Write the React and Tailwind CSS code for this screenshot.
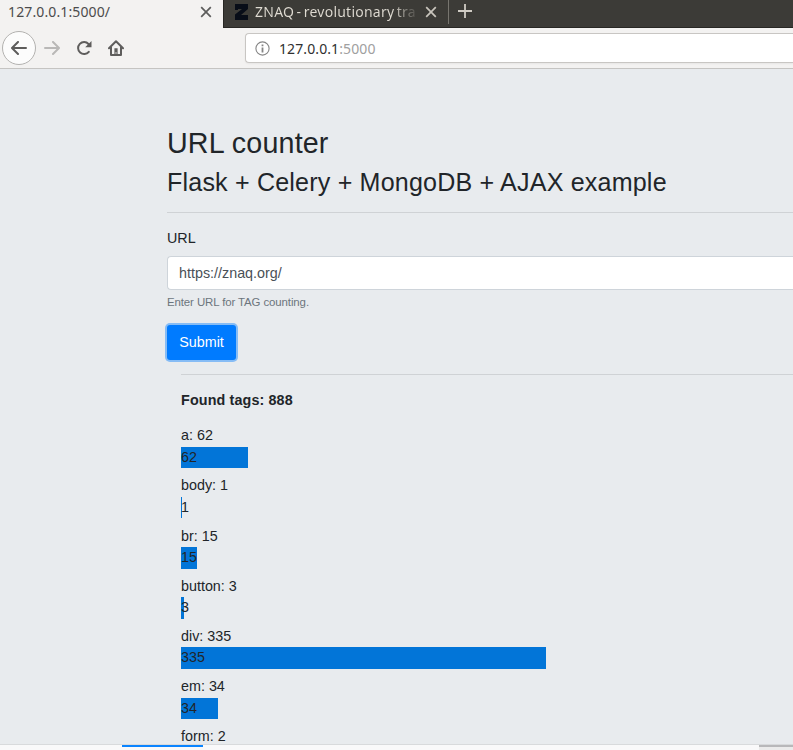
const tags = [
  ['a', 62, 67], ['body', 1, 1], ['br', 15, 16], ['button', 3, 3],
  ['div', 335, 365], ['em', 34, 37], ['form', 2, 0],
];

function Close({ color }) {
  return (
    <svg width="12" height="12" viewBox="0 0 12 12" className="shrink-0" fill="none" stroke={color} strokeWidth="1.7">
      <path d="M1.2 1.2 10.8 10.8M10.8 1.2 1.2 10.8" />
    </svg>
  );
}

function Tabs() {
  return (
    <div className="flex h-7 shrink-0 text-[14px] leading-6 whitespace-nowrap">
      <div className="flex w-[223px] shrink-0 items-start pl-2 text-[#4c4c4c]">
        <span className="w-[192px] tracking-[0.12px]">127.0.0.1:5000/</span>
        <div className="pt-[6px]"><Close color="#5c5c5b" /></div>
      </div>
      <div className="flex flex-1 items-start border-b border-l border-[#282724] bg-[#3c3b37] pl-[11px] text-[#dfdbd2]">
        <svg width="13" height="16" viewBox="0 0 13 16" className="mt-1 shrink-0">
          <path d="M0 0H13V5L6 11H13V16H0V10.5L7 5H3V6H0Z" fill="#080d18" />
        </svg>
        <div className="ml-[7px] w-[165px] bg-linear-to-r from-[#dfdbd2] from-83% to-[#3c3b37] bg-clip-text tracking-[0.24px] [word-spacing:-1.5px] text-transparent">ZNAQ - revolutionary tra</div>
        <div className="ml-[5px] pt-[6px]"><Close color="#c9c5bd" /></div>
        <div className="ml-[11px] h-6 w-px shrink-0 bg-[#77756f]" />
        <svg width="14" height="14" viewBox="0 0 14 14" className="mt-1 ml-[9px] shrink-0" stroke="#d0ccc4" strokeWidth="1.8">
          <path d="M7 0V14M0 7H14" />
        </svg>
      </div>
    </div>
  );
}

function Toolbar() {
  return (
    <div className="flex h-[41px] shrink-0 items-center border-b border-[#c5c4c2] pl-[2px]">
      <div className="flex size-[34px] shrink-0 items-center justify-center rounded-full border border-[#b3b2b0] bg-[#fcfcfc]">
        <svg width="16" height="14" viewBox="0 0 16 14" fill="none" stroke="#5e5d5c" strokeWidth="2" strokeLinecap="round" strokeLinejoin="round">
          <path d="M15 7H1.2M7 1 1 7l6 6" />
        </svg>
      </div>
      <svg width="16" height="14" viewBox="0 0 16 14" className="ml-2 shrink-0" fill="none" stroke="#b9b8b7" strokeWidth="2" strokeLinecap="round" strokeLinejoin="round">
        <path d="M1 7h13.8M9 1l6 6-6 6" />
      </svg>
      <svg width="16" height="16" viewBox="0 0 16 16" className="ml-4 shrink-0" fill="none" stroke="#5e5d5c" strokeWidth="2">
        <path d="M12.8 11.8A6 6 0 1 1 12.5 4" strokeLinecap="round" />
        <path d="M15.5 1v6.2H9.2Z" fill="#5e5d5c" stroke="none" />
      </svg>
      <svg width="16" height="16" viewBox="0 0 16 16" className="ml-4 shrink-0" fill="none" stroke="#5e5d5c" strokeWidth="2" strokeLinecap="round" strokeLinejoin="round">
        <path d="M1 8.2 8 1.3l7 6.9M3 7v8h10V7" />
        <path d="M6.4 8.3h3.2v6.2H8.4V12H7.6v2.5H6.4Z" fill="#5e5d5c" stroke="none" />
      </svg>
      <div className="ml-[121px] flex h-[30px] flex-1 items-center rounded-l-[4px] border border-r-0 border-[#c8c6c3] bg-white pl-[9px] shadow-xs">
        <svg width="15" height="15" viewBox="0 0 15 15" className="shrink-0" fill="none" stroke="#858585">
          <circle cx="7.5" cy="7.5" r="6.6" strokeWidth="1.1" />
          <path d="M7.5 6.5v5M7.5 3.4v1.8" strokeWidth="1.8" />
        </svg>
        <span className="ml-[9px] text-[14px] tracking-[0.1px] text-[#303030]">127.0.0.1<span className="text-[#a0a0a0]">:5000</span></span>
      </div>
    </div>
  );
}

export default function App() {
  return (
    <div className="flex h-[750px] w-[793px] flex-col overflow-hidden bg-[#f3f2f1] font-['Noto_Sans','Open_Sans',sans-serif]">
      <Tabs />
      <Toolbar />
      <main className="h-[675px] shrink-0 overflow-hidden bg-[#e8ebee] pt-[57px] pl-[167px] font-['Liberation_Sans',Arial,sans-serif] text-[14.33px] leading-[21.5px] text-[#212529]">
        <h2 className="mb-[6.6px] text-[28.67px] leading-[34.4px] tracking-[0.16px]">URL counter</h2>
        <h3 className="mb-[14.9px] text-[25.08px] leading-[30.1px] tracking-[0.18px]">Flask + Celery + MongoDB + AJAX example</h3>
        <hr className="mb-[15px] border-t border-[#cfd2d5]" />
        <label className="mb-[6.5px] block">URL</label>
        <div className="flex h-[34px] items-center rounded-l-[4px] border border-r-0 border-[#ced4da] bg-white pt-px pl-[11px] text-[#495057]">https://znaq.org/</div>
        <small className="mt-[4.2px] mb-[13.63px] block text-[11.46px] leading-[17.2px] tracking-[-0.11px] text-[#6c757d]">Enter URL for TAG counting.</small>
        <button className="flex h-[35px] w-[69px] items-center justify-center rounded-[3px] bg-[#007bff] text-white ring-2 ring-[#86bcf5]">Submit</button>
        <section className="ml-[14px] pt-[14px]">
          <hr className="mb-[15px] border-t border-[#cfd2d5]" />
          <p className="mb-[13.8px] font-bold tracking-[0.13px]">Found tags: 888</p>
          {tags.map(([name, count, width]) => (
            <div key={name} className="mb-[7.17px]">
              <div>{name}: {count}</div>
              {width > 0 && <div className="bg-[#0275d8] whitespace-nowrap" style={{ width }}>{count}</div>}
            </div>
          ))}
        </section>
      </main>
      <footer className="flex h-[6px] shrink-0 border-t border-[#d8dadc] bg-[#f9f9fa]">
        <div className="ml-[122px] h-[2px] w-[81px] bg-[#0a84ff]" />
        <div className="ml-auto h-[5px] w-[34px] border-t-2 border-[#b8b8ba] bg-[#ebebeb]" />
      </footer>
    </div>
  );
}
